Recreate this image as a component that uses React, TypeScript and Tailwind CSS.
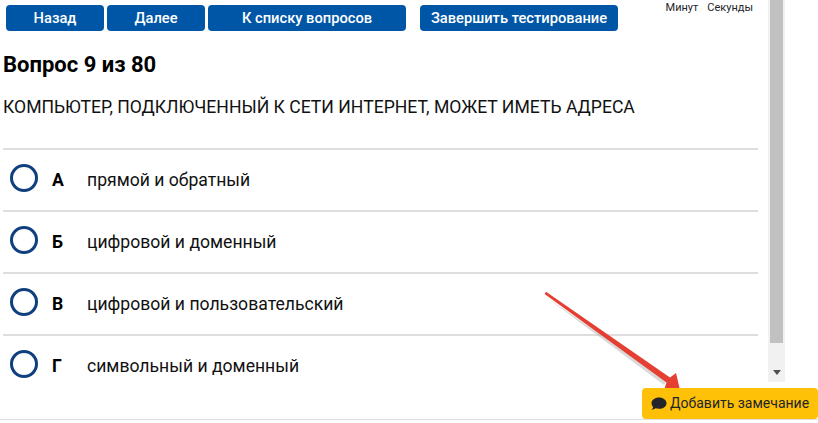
const answers = [
  ["А", "прямой и обратный"],
  ["Б", "цифровой и доменный"],
  ["В", "цифровой и пользовательский"],
  ["Г", "символьный и доменный"],
];

const btn =
  "h-[26px] rounded-[4px] bg-[#0056a6] text-white text-[14.7px] font-medium flex items-center justify-center";

export default function App() {
  return (
    <div className="relative h-[423px] w-[818px] overflow-hidden bg-white text-black font-['Roboto',sans-serif]">
      <div className="flex h-[382px]">
        <div className="w-[768px] shrink-0">
          <div className="flex pt-[5px] pl-[6px] pr-[3px]">
            <div className="flex gap-[3px]">
              <div className={`${btn} w-[98px]`}>Назад</div>
              <div className={`${btn} w-[98px]`}>Далее</div>
              <div className={`${btn} w-[198px]`}>К списку вопросов</div>
            </div>
            <div className={`${btn} w-[198px] ml-[14px]`}>Завершить тестирование</div>
            <div className="ml-auto mr-[12px] -mt-[4px] flex gap-[9px] text-[11px] leading-[14px] text-[#212529]">
              <span>Минут</span>
              <span>Секунды</span>
            </div>
          </div>
          <h1 className="pl-[3px] mt-[20px] text-[22px] leading-[28px] font-bold">Вопрос 9 из 80</h1>
          <p className="pl-[3px] mt-[16px] text-[17.6px] leading-[24px] text-[#111]">
            КОМПЬЮТЕР, ПОДКЛЮЧЕННЫЙ К СЕТИ ИНТЕРНЕТ, МОЖЕТ ИМЕТЬ АДРЕСА
          </p>
          <div className="ml-[3px] mr-[10px] mt-[29px]">
            {answers.map(([letter, text]) => (
              <div key={letter} className="flex h-[62px] items-center border-t-2 border-[#dedede]">
                <span className="ml-[7px] mb-[4px] h-[28px] w-[28px] shrink-0 rounded-full border-[3px] border-[#0f3f7f]" />
                <span className="ml-[14px] w-[35px] text-[17.6px] font-bold">{letter}</span>
                <span className="text-[17.6px] text-[#111]">{text}</span>
              </div>
            ))}
          </div>
        </div>
        <div className="w-[17px] shrink-0 bg-[#f1f1f1] flex flex-col items-center">
          <div className="h-[343px] w-[13px] bg-[#c1c1c1]" />
          <div className="mt-auto mb-[7px] h-0 w-0 border-x-[4px] border-t-[5px] border-x-transparent border-t-[#505050]" />
        </div>
      </div>

      <div className="absolute left-0 right-0 top-[419px] h-px bg-[#dedede]" />

      <svg className="absolute left-[540px] top-[288px]" width="150" height="105" viewBox="0 0 150 105">
        <path d="M4 7.5 L124 97 L127 92 Z" fill="#aaaaaa" opacity="0.45" />
        <path d="M6 3.8 L130 89.5 L136 85 L140 102 L124 102 L126.5 94.5 L4.6 6 Z" fill="#e53f33" />
      </svg>

      <div className="absolute left-[642px] top-[388px] flex h-[31px] w-[176px] items-center rounded-[4px] bg-[#ffc107] pl-[9px] text-[14px] text-[#212529]">
        <svg width="16" height="14" viewBox="0 0 16 14" className="mr-[3px] shrink-0" fill="#212529">
          <path d="M8 0.5C3.8 0.5 0.5 3 0.5 6.2c0 1.4.7 2.7 1.7 3.7-.3 1.3-1.2 2.3-1.6 2.8 1.5 0 3-.6 4-1.4 1 .3 2.2.5 3.4.5 4.2 0 7.5-2.5 7.5-5.6S12.2.5 8 .5z" />
        </svg>
        Добавить замечание
      </div>
    </div>
  );
}
